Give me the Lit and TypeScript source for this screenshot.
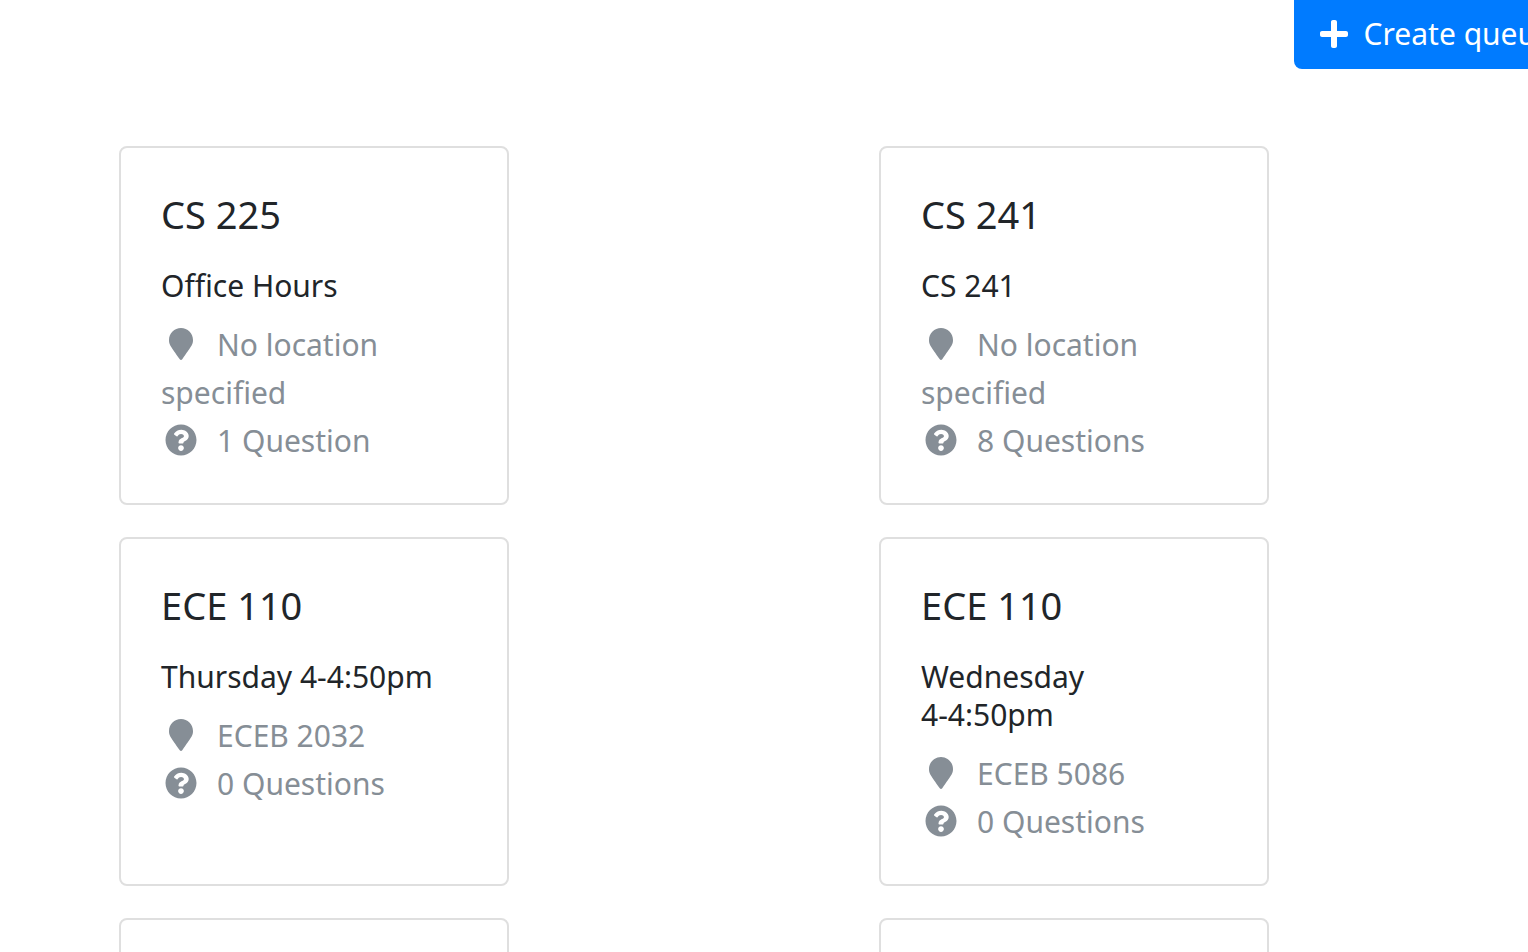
import { LitElement, html, css, svg } from "lit";
import { customElement, property } from "lit/decorators.js";

interface Queue {
  course: string;
  name: string;
  location: string;
  questions: number;
}

const QUEUES: Queue[] = [
  { course: "CS 225", name: "Office Hours", location: "", questions: 1 },
  { course: "CS 241", name: "CS 241", location: "", questions: 8 },
  { course: "ECE 110", name: "Thursday 4-4:50pm", location: "ECEB 2032", questions: 0 },
  { course: "ECE 110", name: "Wednesday 4-4:50pm", location: "ECEB 5086", questions: 0 },
];

const markerPath = svg`<path fill="currentColor" d="M172.268 501.67C26.97 291.031 0 269.413 0 192 0 85.961 85.961 0 192 0s192 85.961 192 192c0 77.413-26.97 99.031-172.268 309.67-9.535 13.774-29.93 13.773-39.464 0z"/>`;
const questionPath = svg`<path fill="currentColor" d="M504 256c0 136.997-111.043 248-248 248S8 392.997 8 256C8 119.083 119.043 8 256 8s248 111.083 248 248zM262.655 90c-54.497 0-89.255 22.957-116.549 63.758-3.536 5.286-2.353 12.415 2.715 16.258l34.699 26.31c5.205 3.947 12.621 3.008 16.665-2.122 17.864-22.658 30.113-35.797 57.303-35.797 20.429 0 45.698 13.148 45.698 32.958 0 14.976-12.363 22.667-32.534 33.976C247.128 238.528 216 254.941 216 296v4c0 6.627 5.373 12 12 12h56c6.627 0 12-5.373 12-12v-1.333c0-28.462 83.186-29.647 83.186-106.667 0-58.002-60.165-102-116.531-102zM256 338c-25.365 0-46 20.635-46 46 0 25.364 20.635 46 46 46s46-20.636 46-46c0-25.365-20.635-46-46-46z"/>`;
const plusPath = svg`<path fill="currentColor" d="M416 208H272V64c0-17.67-14.33-32-32-32h-32c-17.67 0-32 14.33-32 32v144H32c-17.67 0-32 14.33-32 32v32c0 17.67 14.33 32 32 32h144v144c0 17.67 14.33 32 32 32h32c17.67 0 32-14.33 32-32V304h144c17.67 0 32-14.33 32-32v-32c0-17.67-14.33-32-32-32z"/>`;

@customElement("queue-card")
export class QueueCard extends LitElement {
  @property({ attribute: false }) queue?: Queue;

  static styles = css`
    :host {
      display: block;
      box-sizing: border-box;
      min-height: 348px;
      padding: 38px 48px 38px 40px;
      border: 2px solid #dfdfdf;
      border-radius: 8px;
      background: #fff;
    }
    .course {
      margin: 0 0 25px;
      font-size: 38px;
      font-weight: 400;
      line-height: 56px;
    }
    .name {
      margin: 0 0 16px;
      font-size: 30px;
      font-weight: 400;
      line-height: 38px;
    }
    .word {
      white-space: nowrap;
    }
    .detail {
      margin: 0;
      color: #868e96;
      line-height: 48px;
    }
    .icon {
      width: 40px;
      height: 32px;
      margin-right: 16px;
      vertical-align: -4px;
    }
  `;

  render() {
    const q = this.queue;
    if (!q) return html``;
    // Time ranges such as "4-4:50pm" stay on one line.
    return html`
      <h2 class="course">${q.course}</h2>
      <h3 class="name">${q.name.split(" ").map((word) => html`<span class="word">${word}</span> `)}</h3>
      <p class="detail"><svg class="icon" viewBox="0 0 384 512" aria-hidden="true">${markerPath}</svg>${q.location || "No location specified"}</p>
      <p class="detail"><svg class="icon" viewBox="0 0 512 512" aria-hidden="true">${questionPath}</svg>${q.questions} ${q.questions === 1 ? "Question" : "Questions"}</p>
    `;
  }
}

@customElement("app-root")
export class AppRoot extends LitElement {
  static styles = css`
    :host {
      display: block;
      height: 100vh;
      overflow: hidden;
      background: #fff;
      color: #212529;
      font-family: "Segoe UI", "Noto Sans", "Open Sans", sans-serif;
      font-size: 30px;
    }
    .toolbar {
      display: flex;
      justify-content: flex-end;
      margin-right: -51px;
    }
    .create {
      display: flex;
      align-items: center;
      gap: 16px;
      padding: 10px 26px 11px;
      border: 0;
      border-radius: 0 0 8px 8px;
      background: #007bff;
      color: #fff;
      font: inherit;
      line-height: 48px;
      white-space: nowrap;
    }
    .plus {
      width: 28px;
      height: 32px;
    }
    .queues {
      display: grid;
      grid-template-columns: 1fr 1fr;
      gap: 32px 370px;
      padding: 77px 259px 0 119px;
    }
  `;

  render() {
    return html`
      <header class="toolbar">
        <button class="create" type="button">
          <svg class="plus" viewBox="0 0 448 512" aria-hidden="true">${plusPath}</svg>
          Create queue
        </button>
      </header>
      <main class="queues">
        ${QUEUES.map((q) => html`<queue-card .queue=${q}></queue-card>`)}
        <queue-card></queue-card>
        <queue-card></queue-card>
      </main>
    `;
  }
}
